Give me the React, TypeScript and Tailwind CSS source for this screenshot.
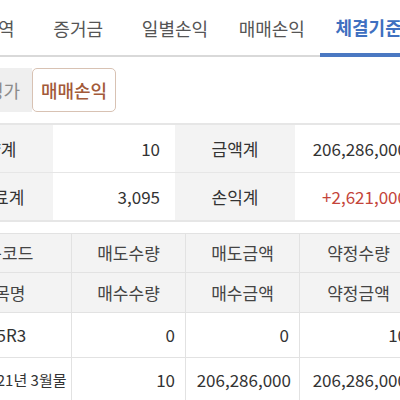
import React from "react";

const font = { fontFamily: '"Noto Sans CJK KR", "Noto Sans", sans-serif' };

export default function App() {
  const tabs = ["잔고내역", "증거금", "일별손익", "매매손익", "체결기준"];
  return (
    <div className="w-[400px] h-[400px] overflow-hidden bg-white" style={font}>
      <div className="w-[484px] ml-[-67px]">
        <div className="flex h-[57px] border-b-2 border-[#d9d9d9]">
          {tabs.map((t, i) =>
            i === 4 ? (
              <div
                key={t}
                className="w-[96.8px] shrink-0 flex items-center justify-center pt-[2px] -mb-[2px] border-b-4 border-[#4a78c2] text-[18px] font-semibold text-[#3f70c0]"
              >
                {t}
              </div>
            ) : (
              <div
                key={t}
                className="w-[96.8px] shrink-0 flex items-center justify-center pt-[2px] text-[18px] text-[#555555]"
              >
                {t}
              </div>
            )
          )}
        </div>

        <div className="flex pt-[11px] pl-[9px]">
          <div className="w-[90px] h-[44px] flex items-center justify-center bg-[#efefef] rounded-l-[4px] text-[18px] text-[#8c8c8c]">
            잔고평가
          </div>
          <div className="w-[84px] h-[44px] flex items-center justify-center bg-white border border-[#d8c2b3] rounded-[5px] text-[18px] font-medium text-[#a35a39]">
            매매손익
          </div>
        </div>

        <div className="mt-[11px] border-t-2 border-b-2 border-[#e6e6e6] text-[17px] text-[#333333]">
          <div className="grid grid-cols-[120px_122px_120px_122px] h-[48px] border-b border-[#e6e6e6]">
            <div className="bg-[#f3f3f3] flex items-center justify-center">수량계</div>
            <div className="flex items-center justify-end pr-[15px]">10</div>
            <div className="bg-[#f3f3f3] flex items-center justify-center">금액계</div>
            <div className="flex items-center justify-end pr-[10px]">206,286,000</div>
          </div>
          <div className="grid grid-cols-[120px_122px_120px_122px] h-[47px]">
            <div className="bg-[#f3f3f3] flex items-center justify-center">수수료계</div>
            <div className="flex items-center justify-end pr-[15px]">3,095</div>
            <div className="bg-[#f3f3f3] flex items-center justify-center">손익계</div>
            <div className="flex items-center justify-end pr-[10px] text-[#c4443a]">+2,621,000</div>
          </div>
        </div>

        <div className="mt-[11px] border-t border-[#e2e2e2] text-[17px] text-[#333333]">
          <div className="grid grid-cols-[139px_114px_114px_117px] h-[39px] bg-[#f3f3f3] border-b border-[#e2e2e2] text-[#444444]">
            <div className="flex items-center justify-center border-r border-[#e2e2e2]">종목코드</div>
            <div className="flex items-center justify-center border-r border-[#e2e2e2]">매도수량</div>
            <div className="flex items-center justify-center border-r border-[#e2e2e2]">매도금액</div>
            <div className="flex items-center justify-center">약정수량</div>
          </div>
          <div className="grid grid-cols-[139px_114px_114px_117px] h-[40px] bg-[#f3f3f3] border-b border-[#e2e2e2] text-[#444444]">
            <div className="flex items-center justify-center border-r border-[#e2e2e2]">종목명</div>
            <div className="flex items-center justify-center border-r border-[#e2e2e2]">매수수량</div>
            <div className="flex items-center justify-center border-r border-[#e2e2e2]">매수금액</div>
            <div className="flex items-center justify-center">약정금액</div>
          </div>
          <div className="grid grid-cols-[139px_114px_114px_117px] h-[45px] border-b border-[#e2e2e2]">
            <div className="flex items-center justify-center border-r border-[#e2e2e2]">105R3</div>
            <div className="flex items-center justify-end pr-[10px] border-r border-[#e2e2e2]">0</div>
            <div className="flex items-center justify-end pr-[10px] border-r border-[#e2e2e2]">0</div>
            <div className="flex items-center justify-end pr-[10px]">10</div>
          </div>
          <div className="grid grid-cols-[139px_114px_114px_117px] h-[45px] border-b border-[#e2e2e2]">
            <div className="flex items-center justify-center border-r border-[#e2e2e2] text-[15px]">미니 F 2021년 3월물</div>
            <div className="flex items-center justify-end pr-[10px] border-r border-[#e2e2e2]">10</div>
            <div className="flex items-center justify-end pr-[8px] border-r border-[#e2e2e2]">206,286,000</div>
            <div className="flex items-center justify-end pr-[10px]">206,286,000</div>
          </div>
        </div>
      </div>
    </div>
  );
}
